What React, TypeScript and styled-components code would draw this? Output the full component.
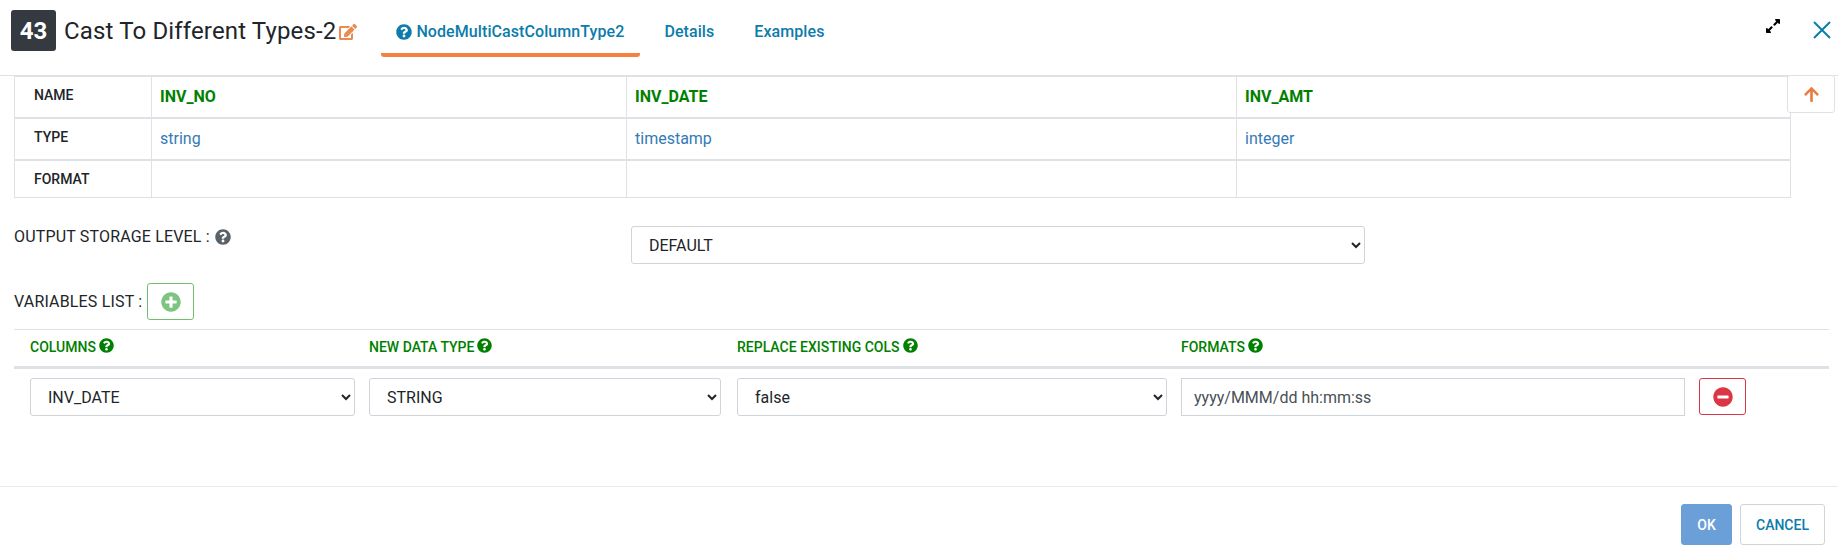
import React from 'react';
import styled, { createGlobalStyle } from 'styled-components';
import {
  FaArrowUp,
  FaEdit,
  FaExpandAlt,
  FaMinusCircle,
  FaPlusCircle,
  FaQuestionCircle,
} from 'react-icons/fa';

const GlobalStyle = createGlobalStyle`
  html, body {
    margin: 0;
    background: #fff;
    font-family: Roboto, "Liberation Sans", sans-serif;
    color: #212529;
  }
  * {
    box-sizing: border-box;
  }
`;

const Modal = styled.div`
  width: 1838px;
  height: 553px;
  display: flex;
  flex-direction: column;
  background: #fff;
`;

const Header = styled.header`
  height: 75px;
  flex: none;
  display: flex;
  align-items: flex-start;
  padding: 10px 6px 0 11px;
`;

const Badge = styled.div`
  width: 45px;
  height: 41px;
  border-radius: 3px;
  background: #343a40;
  color: #fff;
  font-size: 24px;
  font-weight: 700;
  display: flex;
  align-items: center;
  justify-content: center;
`;

const Title = styled.h4`
  margin: 6px 0 0 8px;
  font-size: 24px;
  line-height: 30px;
  font-weight: 400;
  letter-spacing: 0.15px;
  color: #212529;
`;

const EditIcon = styled(FaEdit)`
  margin: 14px 0 0 3px;
  width: 18px;
  height: 16px;
  color: #ea8a50;
`;

const Tabs = styled.nav`
  display: flex;
  margin-left: 24px;
  height: 47px;
`;

const Tab = styled.a<{ $active?: boolean }>`
  display: flex;
  align-items: flex-start;
  gap: 4px;
  padding: 12px 16px 0 ${(p) => (p.$active ? '15px' : '24px')};
  font-size: 16px;
  line-height: 20px;
  font-weight: 500;
  letter-spacing: 0.08px;
  color: #0b7cab;
  border-bottom: 4px solid ${(p) => (p.$active ? '#f5813f' : 'transparent')};
  border-radius: 0 0 3px 3px;
  svg {
    margin-top: 2px;
    width: 16px;
    height: 16px;
  }
`;

const HeaderActions = styled.div`
  margin-left: auto;
  display: flex;
  align-items: flex-start;
  gap: 31px;
  padding-top: 8px;
`;

const ExpandIcon = styled(FaExpandAlt)`
  width: 16px;
  height: 16px;
  color: #000;
`;

const CloseIcon = styled.svg`
  width: 20px;
  height: 20px;
  margin-top: 2px;
  stroke: #0b7cab;
  stroke-width: 2;
  fill: none;
`;

const Body = styled.div`
  flex: 1;
  border-top: 1px solid #dee2e6;
  padding: 0 9px 0 14px;
  position: relative;
`;

const SchemaTable = styled.table`
  width: 1776px;
  border-collapse: collapse;
  table-layout: fixed;
  font-size: 16px;
  td {
    border: 1px solid #dee2e6;
    padding: 0 0 0 8px;
    vertical-align: middle;
  }
  tr + tr td {
    border-top-width: 2px;
  }
`;

const RowName = styled.td<{ $low?: boolean }>`
  font-size: 14px;
  font-weight: 500;
  color: #212529;
  padding-left: 19px !important;
  padding-bottom: ${(p) => (p.$low ? '0' : '3px')} !important;
`;

const NameCell = styled.td`
  font-weight: 700;
  color: #008000;
`;

const TypeCell = styled.td`
  color: #337ab7;
`;

const Row = styled.tr<{ $h: number }>`
  height: ${(p) => p.$h}px;
`;

const UpButton = styled.button`
  position: absolute;
  top: -1px;
  right: 3px;
  width: 48px;
  height: 38px;
  padding: 0;
  border: 1px solid #dee2e6;
  border-radius: 3px;
  background: #fff;
  color: #e77f42;
  display: flex;
  align-items: center;
  justify-content: center;
  svg {
    width: 17px;
    height: 17px;
  }
`;

const StorageRow = styled.div`
  margin-top: 28px;
  display: grid;
  grid-template-columns: 617px 734px;
  height: 38px;
`;

const FieldLabel = styled.label`
  margin-top: 1px;
  font-size: 16px;
  line-height: 20px;
  letter-spacing: 0.17px;
  color: #212529;
  display: flex;
  align-items: center;
  gap: 5px;
  height: 20px;
`;

const HelpIcon = styled(FaQuestionCircle)<{ $green?: boolean }>`
  width: ${(p) => (p.$green ? '15px' : '16px')};
  height: ${(p) => (p.$green ? '15px' : '16px')};
  color: ${(p) => (p.$green ? '#008000' : '#5a6268')};
`;

const Select = styled.select`
  width: 100%;
  height: 38px;
  padding: 0 12px 0 13px;
  border: 1px solid #ced4da;
  border-radius: 3px;
  background-color: #fff;
  font-family: inherit;
  font-size: 16px;
  color: #212529;
`;

const VariablesBar = styled.div`
  margin-top: 19px;
  display: flex;
  align-items: center;
  gap: 5px;
  height: 37px;
`;

const AddButton = styled.button`
  width: 47px;
  height: 37px;
  padding: 0;
  border: 1px solid #6fbf73;
  border-radius: 3px;
  background: #fff;
  color: #7cc47f;
  display: flex;
  align-items: center;
  justify-content: center;
  svg {
    width: 20px;
    height: 20px;
  }
`;

const VariablesGrid = styled.div`
  margin-top: 9px;
  border-top: 1px solid #dee2e6;
`;

const VariablesHead = styled.div`
  height: 39px;
  display: grid;
  grid-template-columns: 339px 368px 444px 1fr;
  padding-left: 16px;
  border-bottom: 3px solid #dee2e6;
`;

const ColumnTitle = styled.div`
  padding-top: 8px;
  font-size: 14px;
  font-weight: 500;
  color: #008000;
  display: flex;
  align-items: flex-start;
  gap: 3px;
  line-height: 18px;
`;

const VariablesRow = styled.div`
  margin-top: 9px;
  display: grid;
  grid-template-columns: 325px 354px 430px 504px 47px;
  column-gap: 14px;
  padding-left: 16px;
  > :nth-child(2) {
    width: 352px;
  }
`;

const TextInput = styled.input`
  height: 38px;
  width: 100%;
  padding: 0 12px;
  border: 1px solid #ced4da;
  background: #fff;
  font-family: inherit;
  font-size: 16px;
  color: #495057;
`;

const RemoveButton = styled.button`
  height: 37px;
  padding: 0;
  border: 1px solid #dc3545;
  border-radius: 3px;
  background: #fff;
  color: #dc3545;
  display: flex;
  align-items: center;
  justify-content: center;
  svg {
    width: 20px;
    height: 20px;
  }
`;

const Footer = styled.footer`
  height: 67px;
  flex: none;
  border-top: 1px solid #e9ecef;
  display: flex;
  justify-content: flex-end;
  gap: 8px;
  padding: 17px 13px 0 0;
`;

const FooterButton = styled.button<{ $primary?: boolean }>`
  height: 41px;
  width: ${(p) => (p.$primary ? '51px' : '85px')};
  padding: 0;
  border-radius: 3px;
  border: 1px solid ${(p) => (p.$primary ? '#6b9fd8' : '#ced4da')};
  background: ${(p) => (p.$primary ? '#6b9fd8' : '#fff')};
  color: ${(p) => (p.$primary ? '#fff' : '#0b7cab')};
  font-family: inherit;
  font-size: 14px;
  font-weight: 500;
`;

const schema = [
  { name: 'INV_NO', type: 'string' },
  { name: 'INV_DATE', type: 'timestamp' },
  { name: 'INV_AMT', type: 'integer' },
];

const columnTitles = ['COLUMNS', 'NEW DATA TYPE', 'REPLACE EXISTING COLS', 'FORMATS'];

export default function App() {
  return (
    <Modal>
      <GlobalStyle />
      <Header>
        <Badge>43</Badge>
        <Title>Cast To Different Types-2</Title>
        <EditIcon />
        <Tabs>
          <Tab $active>
            <FaQuestionCircle />
            NodeMultiCastColumnType2
          </Tab>
          <Tab>Details</Tab>
          <Tab>Examples</Tab>
        </Tabs>
        <HeaderActions>
          <ExpandIcon />
          <CloseIcon viewBox="0 0 20 20">
            <path d="M2 2 L18 18 M18 2 L2 18" />
          </CloseIcon>
        </HeaderActions>
      </Header>
      <Body>
        <SchemaTable>
          <colgroup>
            <col width="137" />
            <col width="475" />
            <col width="610" />
            <col width="554" />
          </colgroup>
          <tbody>
            <Row $h={41}>
              <RowName>NAME</RowName>
              {schema.map((c) => (
                <NameCell key={c.name}>{c.name}</NameCell>
              ))}
            </Row>
            <Row $h={42}>
              <RowName>TYPE</RowName>
              {schema.map((c) => (
                <TypeCell key={c.name}>{c.type}</TypeCell>
              ))}
            </Row>
            <Row $h={38}>
              <RowName $low>FORMAT</RowName>
              <td />
              <td />
              <td />
            </Row>
          </tbody>
        </SchemaTable>
        <UpButton>
          <FaArrowUp />
        </UpButton>
        <StorageRow>
          <FieldLabel>
            OUTPUT STORAGE LEVEL : <HelpIcon />
          </FieldLabel>
          <Select defaultValue="DEFAULT">
            <option>DEFAULT</option>
          </Select>
        </StorageRow>
        <VariablesBar>
          <FieldLabel>VARIABLES LIST :</FieldLabel>
          <AddButton>
            <FaPlusCircle />
          </AddButton>
        </VariablesBar>
        <VariablesGrid>
          <VariablesHead>
            {columnTitles.map((t) => (
              <ColumnTitle key={t}>
                {t} <HelpIcon $green />
              </ColumnTitle>
            ))}
          </VariablesHead>
          <VariablesRow>
            <Select defaultValue="INV_DATE">
              <option>INV_DATE</option>
            </Select>
            <Select defaultValue="STRING">
              <option>STRING</option>
            </Select>
            <Select defaultValue="false">
              <option>false</option>
            </Select>
            <TextInput defaultValue="yyyy/MMM/dd hh:mm:ss" />
            <RemoveButton>
              <FaMinusCircle />
            </RemoveButton>
          </VariablesRow>
        </VariablesGrid>
      </Body>
      <Footer>
        <FooterButton $primary>OK</FooterButton>
        <FooterButton>CANCEL</FooterButton>
      </Footer>
    </Modal>
  );
}
